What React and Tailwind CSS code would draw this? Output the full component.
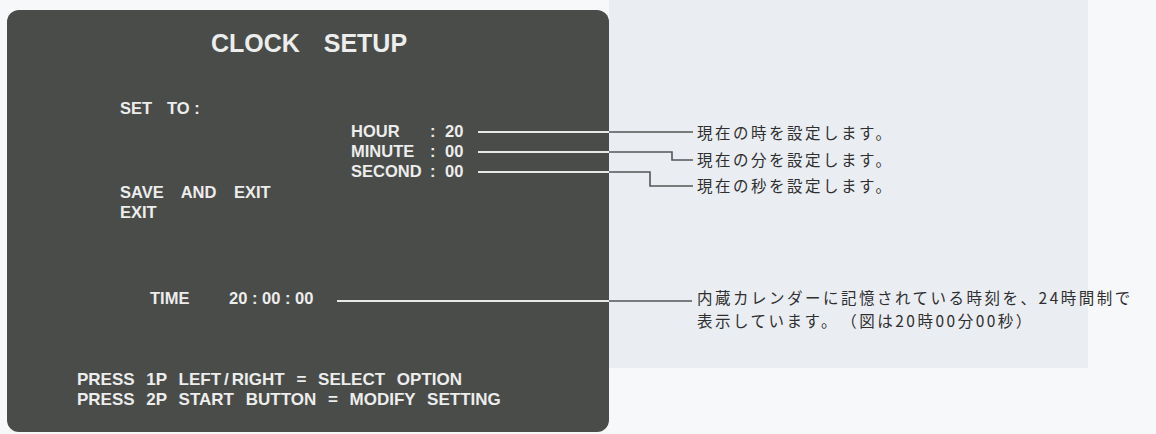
export default function App() {
  const sans = { fontFamily: '"Liberation Sans", Arial, sans-serif' };
  const jp = { fontFamily: '"Noto Sans CJK JP", "Noto Sans", sans-serif' };
  return (
    <div className="relative w-[1156px] h-[434px] bg-[#f7f8f9] flex items-start overflow-hidden">
      {/* Left: OSD screen panel */}
      <div className="pl-[7px] pt-[10px] shrink-0">
        <div
          className="w-[602px] h-[422px] rounded-[12px] bg-[#494c48] text-[#ededed] font-bold flex flex-col pt-[21px]"
          style={sans}
        >
          <div className="text-[25px] leading-[25px] text-center [word-spacing:17px] pl-[2px]">CLOCK SETUP</div>

          <div className="text-[16.5px] leading-[20px] flex flex-col">
            <div className="mt-[42px] pl-[113px] whitespace-pre">
              <span className="mr-[15px]">SET</span>TO :
            </div>

            <div className="mt-[3px] pl-[344px] flex flex-col">
              {[
                ["HOUR", "20"],
                ["MINUTE", "00"],
                ["SECOND", "00"],
              ].map(([label, value]) => (
                <div key={label} className="flex">
                  <span className="w-[79px]">{label}</span>
                  <span className="w-[15px]">:</span>
                  <span>{value}</span>
                </div>
              ))}
            </div>

            <div className="mt-[1px] pl-[113px] [word-spacing:13px]">SAVE AND EXIT</div>
            <div className="pl-[113px]">EXIT</div>

            <div className="mt-[66px] pl-[143px] flex">
              <span className="w-[79px]">TIME</span>
              <span>20 : 00 : 00</span>
            </div>

            <div className="mt-[62px] pl-[70px] text-[17px] [word-spacing:7px] flex flex-col">
              <div>
                PRESS 1P LEFT<span className="mx-[3px]">/</span>RIGHT = SELECT OPTION
              </div>
              <div>PRESS 2P START BUTTON = MODIFY SETTING</div>
            </div>
          </div>
        </div>
      </div>

      {/* Right: annotations on paper background */}
      <div
        className="w-[479px] h-[368px] bg-[#eaedf2] pl-[88px] pt-[121px] flex flex-col text-[15.5px] leading-[23px] tracking-[2.5px] text-[#2f2f2f]"
        style={jp}
      >
        <div>現在の時を設定します。</div>
        <div className="mt-[4px]">現在の分を設定します。</div>
        <div className="mt-[3px]">現在の秒を設定します。</div>
        <div className="mt-[89px] whitespace-nowrap">
          <div>内蔵カレンダーに記憶されている時刻を、24時間制で</div>
          <div>
            表示しています。<span className="ml-[10px]">（図は20時00分00秒）</span>
          </div>
        </div>
      </div>

      {/* Leader lines */}
      <svg
        className="absolute inset-0 pointer-events-none"
        width="1156"
        height="434"
        viewBox="0 0 1156 434"
        fill="none"
      >
        <g stroke="#e8e8e8" strokeWidth="2">
          <path d="M478 132H609" />
          <path d="M478 152H609" />
          <path d="M478 172H609" />
          <path d="M337 301H609" />
        </g>
        <g stroke="#555" strokeWidth="1.6">
          <path d="M609 132H693" />
          <path d="M609 152H672V160H693" />
          <path d="M609 172H650V186H693" />
          <path d="M609 301H692" />
        </g>
      </svg>
    </div>
  );
}
